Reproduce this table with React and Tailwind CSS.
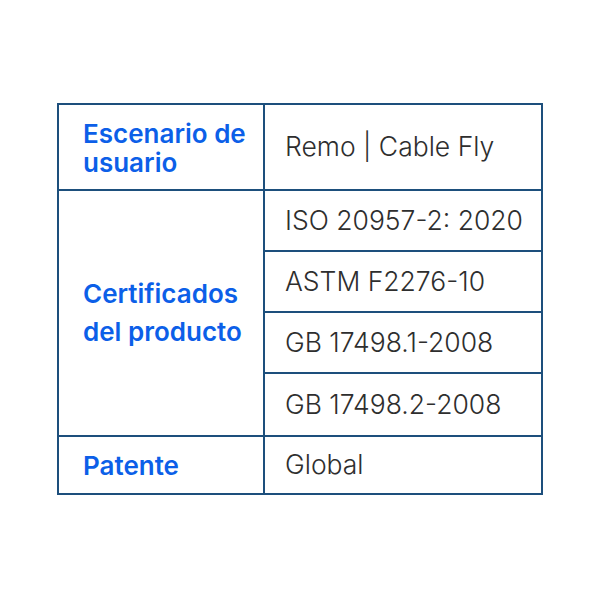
export default function App() {
  const blue = "text-[#0c5fe8]";
  const gray = "text-[#2e2e2e]";
  const sub = "h-[61px] flex items-center pl-[20px] text-[26.5px] font-light " + gray;
  return (
    <div className="w-[600px] h-[600px] bg-white pt-[103px] pl-[57px]" style={{ fontFamily: "Inter, sans-serif" }}>
      <div className="w-[486px] border-2 border-[#1d4f7c] flex flex-col">
        <div className="flex h-[86px] border-b-2 border-[#1d4f7c]">
          <div className={"w-[206px] border-r-2 border-[#1d4f7c] flex items-center pl-[24px] pt-[2px] text-[26px] font-semibold leading-[29px] " + blue}>
            Escenario de<br />usuario
          </div>
          <div className={"flex-1 flex items-center pl-[20px] text-[26.5px] font-light " + gray}>Remo | Cable Fly</div>
        </div>
        <div className="flex border-b-2 border-[#1d4f7c]">
          <div className={"w-[206px] border-r-2 border-[#1d4f7c] flex items-center pl-[24px] text-[26px] font-semibold leading-[38px] " + blue}>
            Certificados<br />del producto
          </div>
          <div className="flex-1 flex flex-col">
            <div className={sub + " border-b-2 border-[#1d4f7c]"}>ISO 20957-2: 2020</div>
            <div className={sub + " border-b-2 border-[#1d4f7c]"}>ASTM F2276-10</div>
            <div className={sub + " border-b-2 border-[#1d4f7c]"}>GB 17498.1-2008</div>
            <div className={sub}>GB 17498.2-2008</div>
          </div>
        </div>
        <div className="flex h-[56px]">
          <div className={"w-[206px] border-r-2 border-[#1d4f7c] flex items-center pl-[24px] text-[26px] font-semibold " + blue}>Patente</div>
          <div className={"flex-1 flex items-center pl-[20px] text-[26.5px] font-light " + gray}>Global</div>
        </div>
      </div>
    </div>
  );
}
